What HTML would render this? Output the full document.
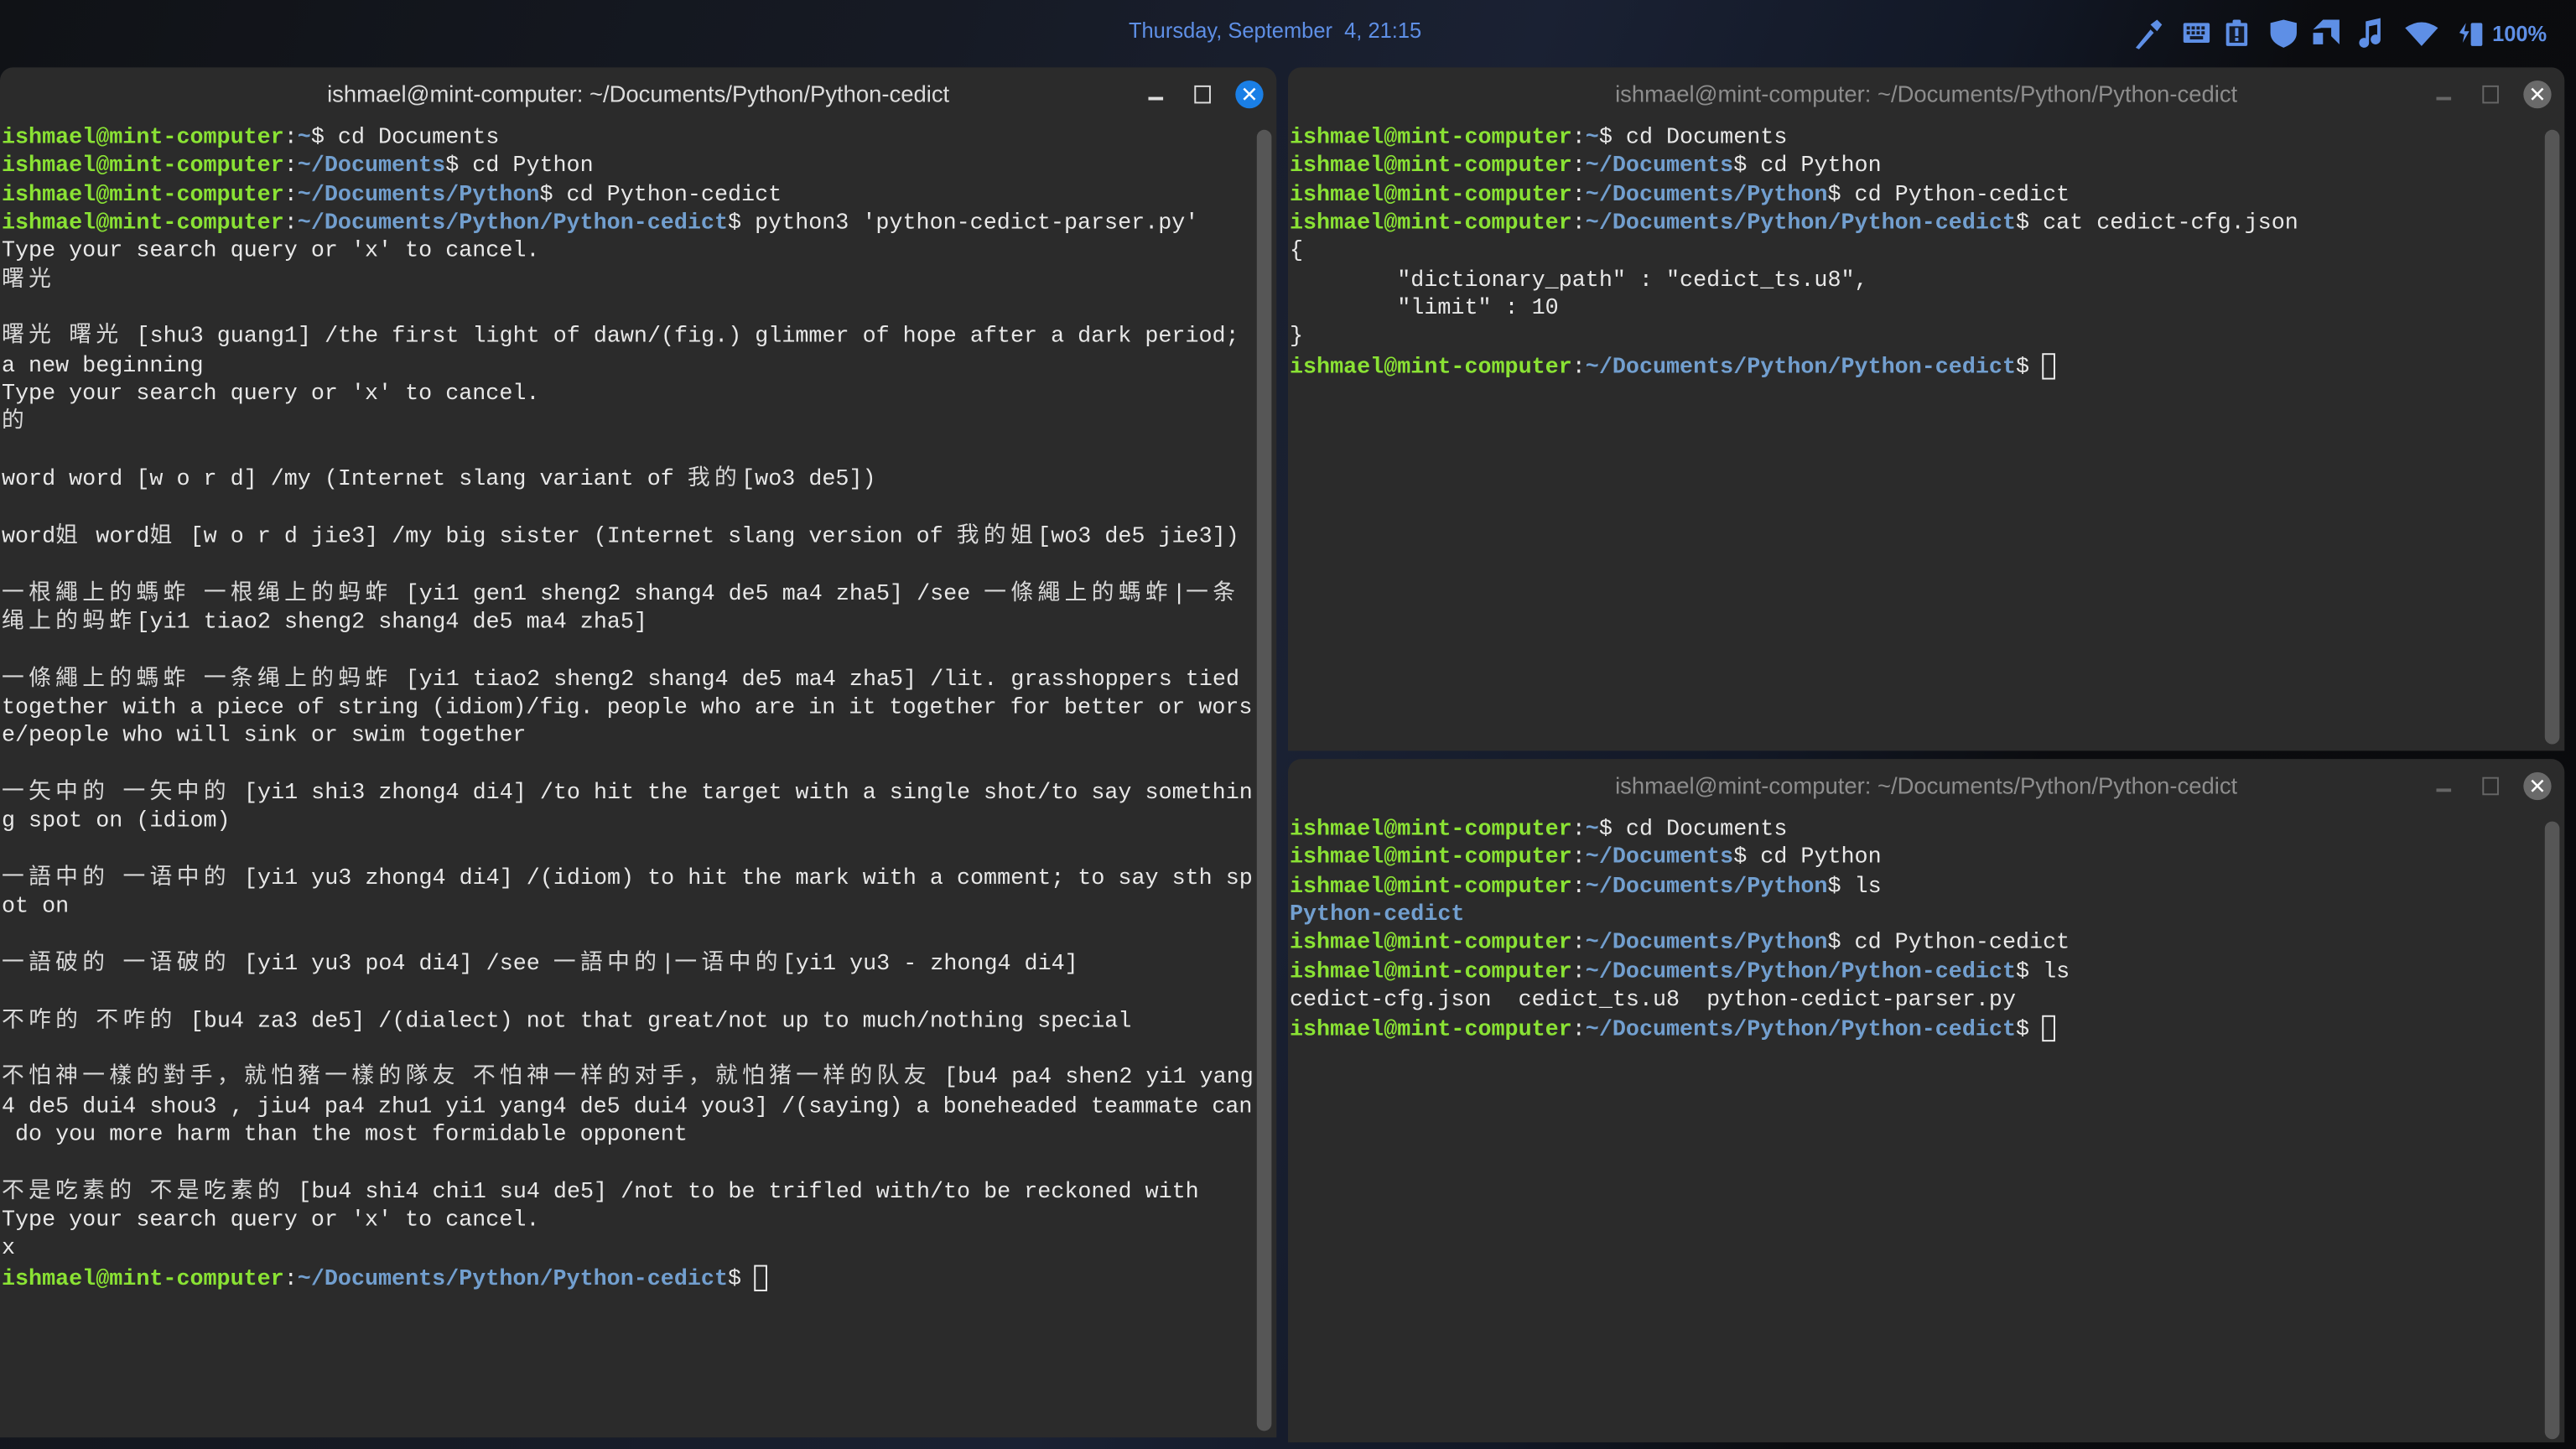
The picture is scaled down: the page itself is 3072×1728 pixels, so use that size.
<!DOCTYPE html>
<html><head><meta charset="utf-8"><style>
html,body{margin:0;padding:0;width:3072px;height:1728px;overflow:hidden;background:#0b0d12}
#s{position:absolute;left:0;top:0;width:1568px;height:882px;transform:scale(1.959184);transform-origin:0 0;
background:linear-gradient(110deg,#101216 0%,#161a24 30%,#1a2133 50%,#121826 65%,#0b0c0f 75%,#0a0a0c 100%)}
.clock{position:absolute;left:687px;top:11px;font:500 13px "Liberation Sans",sans-serif;color:#5e8fe6}
.win{position:absolute;background:#2b2b2b;border-radius:8px 8px 0 0;overflow:hidden}
.tb{position:absolute;left:0;right:0;top:0;height:33px;text-align:center;font:14px "Liberation Sans",sans-serif;line-height:33px;color:#dcdcdc}
.win.in .tb{color:#8d8d8d}
.ctl{position:absolute;top:8px;width:17px;height:17px;border-radius:50%;color:#fff;font:13px "Liberation Sans",sans-serif;line-height:17px;text-align:center}
pre{position:absolute;left:1px;margin:0;font:13.65px "Liberation Mono","Noto Sans CJK SC",monospace;line-height:17.35px;color:#e8e8e8;white-space:pre}
.g{color:#8ae234;font-weight:bold}.b{color:#729fcf;font-weight:bold}
.c{display:inline-block;height:17.35px;line-height:17.35px;vertical-align:top;overflow:visible;position:relative;top:-3px;letter-spacing:2.75px;font-family:"Noto Sans CJK SC",sans-serif;color:#d8d8d8}
.cur{display:inline-block;width:8px;height:16px;border:1px solid #eee;vertical-align:-4px;box-sizing:border-box}
.sb{position:absolute;width:9px;border-radius:5px;background:#565656}
</style></head><body><div id="s">
<div class="clock">Thursday, September &nbsp;4, 21:15</div>
<svg style="position:absolute;left:1296px;top:10px" width="260" height="22" viewBox="0 0 260 22" fill="#5e8fe6">
<path d="M4 19 L13 8 L15 10 L6 20 Z M13 5 l4 -3 l3 3 l-3 4z"/>
<rect x="33" y="4" width="16" height="12" rx="1"/>
<g fill="#141a28"><rect x="35" y="6" width="2" height="2"/><rect x="38" y="6" width="2" height="2"/><rect x="41" y="6" width="2" height="2"/><rect x="44" y="6" width="2" height="2"/><rect x="35" y="9" width="2" height="2"/><rect x="38" y="9" width="2" height="2"/><rect x="41" y="9" width="2" height="2"/><rect x="44" y="9" width="2" height="2"/><rect x="37" y="12" width="8" height="2"/></g>
<rect x="59" y="4" width="13" height="14" rx="1"/>
<g fill="#141a28"><rect x="61" y="6" width="9" height="10"/></g>
<rect x="64.5" y="7" width="2" height="5"/><rect x="64.5" y="13" width="2" height="2"/><rect x="63" y="2" width="5" height="3" rx="1"/>
<path d="M86 4 L94 2 L102 4 L102 10 Q102 16 94 19 Q86 16 86 10Z"/>
<path d="M112 8 L118 2 L128 2 L128 17 L123 12 L123 7 L117 7Z M112 10 L118 10 L118 17 L112 17Z"/>
<path d="M144 3 L153 1 L153 14 a3 3 0 1 1 -2 -2.8 L151 5 L146 6 L146 16 a3 3 0 1 1 -2 -2.8Z"/>
<path d="M168 7 Q178 0 188 7 L178 18Z"/>
<path d="M201 10 L205 4 L204 9 L207 9 L203 16 L204 11Z"/><rect x="208" y="4" width="7" height="14" rx="1"/>
<text x="221" y="15" font-family="Liberation Sans" font-weight="bold" font-size="13">100%</text>
</svg>

<div class="win" style="left:0;top:41px;width:777px;height:834px">
<div class="tb">ishmael@mint-computer: ~/Documents/Python/Python-cedict</div>
<div style="position:absolute;left:699px;top:18px;width:9px;height:1.5px;background:#ddd"></div>
<div style="position:absolute;left:727px;top:11px;width:8px;height:9px;border:1.3px solid #ddd"></div>
<div class="ctl" style="left:752px;background:#1a7fe6">✕</div>
<div class="sb" style="left:765px;top:38px;height:792px"></div>
<pre style="top:35px"><span class="g">ishmael@mint-computer</span>:<span class="b">~</span>$ cd Documents
<span class="g">ishmael@mint-computer</span>:<span class="b">~/Documents</span>$ cd Python
<span class="g">ishmael@mint-computer</span>:<span class="b">~/Documents/Python</span>$ cd Python-cedict
<span class="g">ishmael@mint-computer</span>:<span class="b">~/Documents/Python/Python-cedict</span>$ python3 'python-cedict-parser.py'
Type your search query or 'x' to cancel.
<span class="c">曙光</span>

<span class="c">曙光</span> <span class="c">曙光</span> [shu3 guang1] /the first light of dawn/(fig.) glimmer of hope after a dark period;
a new beginning
Type your search query or 'x' to cancel.
<span class="c">的</span>

word word [w o r d] /my (Internet slang variant of <span class="c">我的</span>[wo3 de5])

word<span class="c">姐</span> word<span class="c">姐</span> [w o r d jie3] /my big sister (Internet slang version of <span class="c">我的姐</span>[wo3 de5 jie3])

<span class="c">一根繩上的螞蚱</span> <span class="c">一根绳上的蚂蚱</span> [yi1 gen1 sheng2 shang4 de5 ma4 zha5] /see <span class="c">一條繩上的螞蚱</span>|<span class="c">一条</span>
<span class="c">绳上的蚂蚱</span>[yi1 tiao2 sheng2 shang4 de5 ma4 zha5]

<span class="c">一條繩上的螞蚱</span> <span class="c">一条绳上的蚂蚱</span> [yi1 tiao2 sheng2 shang4 de5 ma4 zha5] /lit. grasshoppers tied
together with a piece of string (idiom)/fig. people who are in it together for better or wors
e/people who will sink or swim together

<span class="c">一矢中的</span> <span class="c">一矢中的</span> [yi1 shi3 zhong4 di4] /to hit the target with a single shot/to say somethin
g spot on (idiom)

<span class="c">一語中的</span> <span class="c">一语中的</span> [yi1 yu3 zhong4 di4] /(idiom) to hit the mark with a comment; to say sth sp
ot on

<span class="c">一語破的</span> <span class="c">一语破的</span> [yi1 yu3 po4 di4] /see <span class="c">一語中的</span>|<span class="c">一语中的</span>[yi1 yu3 - zhong4 di4]

<span class="c">不咋的</span> <span class="c">不咋的</span> [bu4 za3 de5] /(dialect) not that great/not up to much/nothing special

<span class="c">不怕神一樣的對手，就怕豬一樣的隊友</span> <span class="c">不怕神一样的对手，就怕猪一样的队友</span> [bu4 pa4 shen2 yi1 yang
4 de5 dui4 shou3 , jiu4 pa4 zhu1 yi1 yang4 de5 dui4 you3] /(saying) a boneheaded teammate can
 do you more harm than the most formidable opponent

<span class="c">不是吃素的</span> <span class="c">不是吃素的</span> [bu4 shi4 chi1 su4 de5] /not to be trifled with/to be reckoned with
Type your search query or 'x' to cancel.
x
<span class="g">ishmael@mint-computer</span>:<span class="b">~/Documents/Python/Python-cedict</span>$ <span class="cur"></span></pre>
</div>

<div class="win in" style="left:784px;top:41px;width:777px;height:416px">
<div class="tb">ishmael@mint-computer: ~/Documents/Python/Python-cedict</div>
<div style="position:absolute;left:699px;top:18px;width:9px;height:1.5px;background:#666"></div>
<div style="position:absolute;left:727px;top:11px;width:8px;height:9px;border:1.3px solid #666"></div>
<div class="ctl" style="left:752px;background:#6a6a6a">✕</div>
<div class="sb" style="left:765px;top:38px;height:374px"></div>
<pre style="top:35px"><span class="g">ishmael@mint-computer</span>:<span class="b">~</span>$ cd Documents
<span class="g">ishmael@mint-computer</span>:<span class="b">~/Documents</span>$ cd Python
<span class="g">ishmael@mint-computer</span>:<span class="b">~/Documents/Python</span>$ cd Python-cedict
<span class="g">ishmael@mint-computer</span>:<span class="b">~/Documents/Python/Python-cedict</span>$ cat cedict-cfg.json
{
        "dictionary_path" : "cedict_ts.u8",
        "limit" : 10
}
<span class="g">ishmael@mint-computer</span>:<span class="b">~/Documents/Python/Python-cedict</span>$ <span class="cur"></span></pre>
</div>

<div class="win in" style="left:784px;top:462px;width:777px;height:416px">
<div class="tb">ishmael@mint-computer: ~/Documents/Python/Python-cedict</div>
<div style="position:absolute;left:699px;top:18px;width:9px;height:1.5px;background:#666"></div>
<div style="position:absolute;left:727px;top:11px;width:8px;height:9px;border:1.3px solid #666"></div>
<div class="ctl" style="left:752px;background:#6a6a6a">✕</div>
<div class="sb" style="left:765px;top:38px;height:376px"></div>
<pre style="top:35px"><span class="g">ishmael@mint-computer</span>:<span class="b">~</span>$ cd Documents
<span class="g">ishmael@mint-computer</span>:<span class="b">~/Documents</span>$ cd Python
<span class="g">ishmael@mint-computer</span>:<span class="b">~/Documents/Python</span>$ ls
<span class="b">Python-cedict</span>
<span class="g">ishmael@mint-computer</span>:<span class="b">~/Documents/Python</span>$ cd Python-cedict
<span class="g">ishmael@mint-computer</span>:<span class="b">~/Documents/Python/Python-cedict</span>$ ls
cedict-cfg.json  cedict_ts.u8  python-cedict-parser.py
<span class="g">ishmael@mint-computer</span>:<span class="b">~/Documents/Python/Python-cedict</span>$ <span class="cur"></span></pre>
</div>
</div></body></html>
